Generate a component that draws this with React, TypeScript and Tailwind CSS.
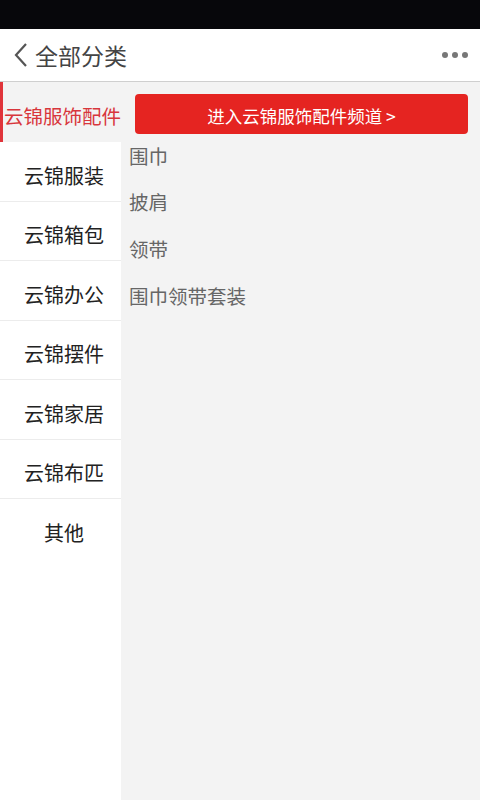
import React from "react";

const font = { fontFamily: '"Noto Sans CJK SC", "Noto Sans", sans-serif' };

export default function App() {
  const cats = ["云锦服装", "云锦箱包", "云锦办公", "云锦摆件", "云锦家居", "云锦布匹", "其他"];
  const subs = ["围巾", "披肩", "领带", "围巾领带套装"];
  return (
    <div className="w-[480px] h-[800px] flex flex-col bg-white overflow-hidden" style={font}>
      <div className="h-[29px] bg-[#07070b] shrink-0" />
      <div className="h-[53px] shrink-0 flex items-center border-b border-[#cfcfcf] bg-white">
        <svg width="16" height="26" viewBox="0 0 16 26" className="ml-[13px]">
          <path d="M13 2 L3 13 L13 24" fill="none" stroke="#555" strokeWidth="2.2" />
        </svg>
        <span className="ml-[6px] text-[23px] text-[#444] leading-none">全部分类</span>
        <div className="ml-auto mr-[12px] flex gap-[4px]">
          <span className="w-[6px] h-[6px] rounded-full bg-[#777]" />
          <span className="w-[6px] h-[6px] rounded-full bg-[#777]" />
          <span className="w-[6px] h-[6px] rounded-full bg-[#777]" />
        </div>
      </div>
      <div className="flex flex-1 min-h-0">
        <div className="w-[121px] shrink-0 flex flex-col bg-white">
          <div className="h-[60px] pt-[7px] pl-[1px] flex items-center justify-center bg-[#f3f3f3] border-l-[3px] border-[#e0343a]">
            <span className="text-[19.5px] text-[#d8363c] whitespace-nowrap">云锦服饰配件</span>
          </div>
          {cats.map((c, i) => (
            <div
              key={c}
              className={`h-[59.5px] pt-[9px] pl-[7px] flex items-center justify-center text-[20px] text-[#222] ${i < cats.length - 1 ? "border-b border-[#ececec]" : ""}`}
            >
              {c}
            </div>
          ))}
        </div>
        <div className="flex-1 bg-[#f3f3f3] flex flex-col">
          <div className="mt-[12px] ml-[14px] mr-[12px] h-[40px] pt-[4px] rounded-[4px] bg-[#e52421] flex items-center justify-center text-white text-[17.5px]">
            进入云锦服饰配件频道 &gt;
          </div>
          <div className="ml-[8px] -mt-[2px] flex flex-col">
            {subs.map((s) => (
              <div key={s} className="h-[46.7px] flex items-center text-[19.5px] text-[#666]">
                {s}
              </div>
            ))}
          </div>
        </div>
      </div>
    </div>
  );
}
